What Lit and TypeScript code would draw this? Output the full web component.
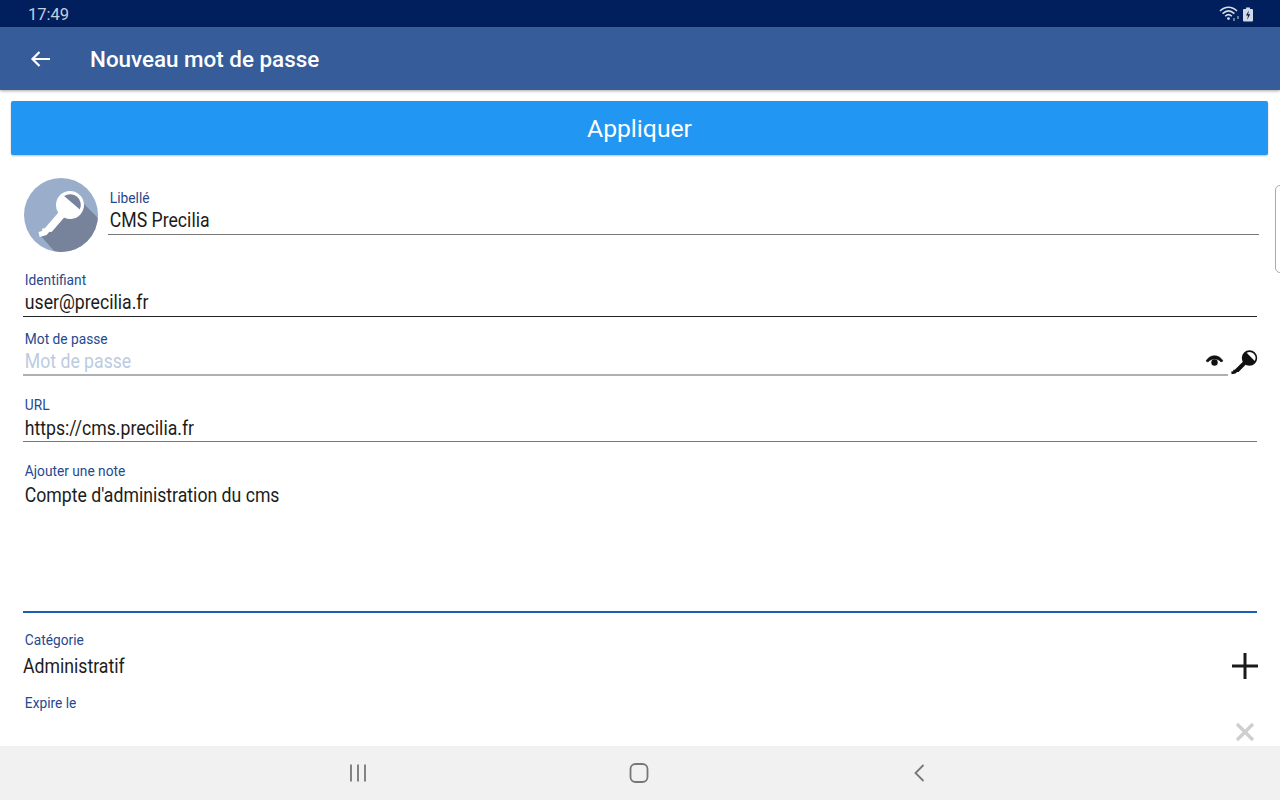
import { LitElement, html, css, svg } from "lit";
import { customElement } from "lit/decorators.js";

const keyIcon = (ring: string, seg: string) => svg`
  <circle r="14" fill="${ring}"/>
  <path d="M-10.400 -3 A10.800 10.800 0 0 1 10.400 -3 Z" fill="${seg}"/>
  <path d="M-3.800 10 H3.800 V32 L2 34 V38 L-2 44 L-6 41 L-4 38 L-5.500 36 L-3.800 34 Z" fill="${ring}"/>`;

@customElement("app-root")
export class AppRoot extends LitElement {
  static styles = css`
    :host { display: block; width: 1280px; height: 800px; font-family: Roboto, "Liberation Sans", sans-serif; background: #fff; overflow: hidden; position: relative; }
    .page { height: 800px; display: flex; flex-direction: column; }
    .status { height: 27px; flex: none; background: #001f5c; color: #c6cedc; display: flex; align-items: center; justify-content: space-between; padding: 1px 25px 0 28px; font-size: 16.500px; box-sizing: border-box; }
    .status svg { display: block; margin-top: -1px; }
    .appbar { height: 63px; flex: none; background: #365d99; color: #fff; display: flex; align-items: center; box-shadow: 0 1px 3px rgba(0,0,0,.35); position: relative; box-sizing: border-box; padding-left: 30px; }
    .title { font-size: 22.400px; font-weight: 500; margin-left: 39px; }
    .content { flex: 1; min-height: 0; overflow: hidden; padding: 11px 12px 0 11px; box-sizing: border-box; }
    .apply { height: 54px; width: 1257px; border-radius: 2px; background: #2196f3; color: #fff; font-size: 24.700px; padding-top: 1px; box-sizing: border-box; display: flex; align-items: center; justify-content: center; box-shadow: 0 1px 2px rgba(0,0,0,.25); }
    .first { display: flex; margin: 23px 9px 0 13px; }
    .avatar { display: block; flex: none; width: 74px; height: 74px; margin-right: 10px; }
    .grow { flex: 1; min-width: 0; }
    .field { height: 44px; border-bottom: 1px solid #777; margin-top: 12px; }
    .label { height: 16px; line-height: 16px; font-size: 15px; color: #25498f; padding-left: 2px; transform-origin: left; transform: scaleX(.915); white-space: nowrap; }
    .value { height: 24px; line-height: 24px; margin-top: 3px; font-size: 19.500px; color: #1c1c1c; padding-left: 2px; transform-origin: left; transform: scaleX(.905); white-space: nowrap; }
    .ph { color: #bccbe0; }
    .stack { margin: 20px 11px 0 12px; }
    .stack .dark { margin-top: 0; border-bottom-color: #222; }
    .pwrow { display: flex; align-items: flex-end; margin-top: 14px; }
    .pwrow .field { margin-top: 0; flex: 1; min-width: 0; border-bottom: 2px solid #b0b0b0; height: 43px; }
    .pwicons { width: 29px; height: 45px; flex: none; position: relative; }
    .pwicons svg { position: absolute; left: -24px; top: 14px; }
    .wide { margin-top: 21px; }
    .url .value { margin-top: 4px; }
    .note { height: 148px; border-bottom: 2px solid #1b5fb0; }
    .note .value { margin-top: 5px; }
    .cat { margin-top: 19px; display: flex; align-items: flex-start; justify-content: space-between; }
    .cat .value { margin-top: 7px; padding-left: 0; }
    .exp { margin-top: 16px; display: flex; align-items: flex-start; justify-content: space-between; }
    .plus { margin: 21px -1px 0 0; display: block; }
    .cross { margin: 27px 2px 0 0; display: block; }
    .nav { height: 54px; flex: none; background: #f1f1f1; display: flex; align-items: center; box-sizing: border-box; }
    .nav svg { display: block; }
    .nav-a { margin-left: 348px; }
    .nav-b { margin-left: 261px; }
    .nav-c { margin-left: 261px; }
    .edge { position: absolute; right: -6px; top: 185px; width: 9px; height: 86px; border: 1px solid #aaa; border-radius: 5px; background: #fff; }
  `;

  render() {
    return html`<div class="page">
      <div class="status">
        <span>17:49</span>
        <svg width="36" height="16" viewBox="0 0 36 16">
          <path d="M1 5 C6 0 13 0 18 5 M3.600 7.600 C7.400 4 11.600 4 15.400 7.600 M6.200 10.200 C8.400 8 10.600 8 12.800 10.200" fill="none" stroke="#d8dee9" stroke-width="1.600"/>
          <circle cx="9.500" cy="12.600" r="1.400" fill="#d8dee9"/>
          <path d="M15 12 V15 M19 10 V13" stroke="#8fa0bd" stroke-width="1.400"/>
          <rect x="24" y="3" width="10" height="12.500" rx="1" fill="#d3d9e4"/><rect x="27" y="1.500" width="4" height="2" fill="#d3d9e4"/>
          <path d="M29.800 4.500 L27 9.600 H29 L28.200 13.800 L31.200 8.200 H29.200 Z" fill="#001f5c"/>
        </svg>
      </div>
      <div class="appbar">
        <svg width="21" height="18" viewBox="0 0 21 18"><path d="M20 9 H2.500 M9.500 2 L2.500 9 L9.500 16" fill="none" stroke="#fff" stroke-width="2.200"/></svg>
        <span class="title">Nouveau mot de passe</span>
      </div>
      <div class="content">
        <div class="apply">Appliquer</div>
        <div class="first">
          <svg class="avatar" viewBox="0 0 74 74">
            <defs><clipPath id="av"><circle cx="37" cy="37" r="37"/></clipPath></defs>
            <circle cx="37" cy="37" r="37" fill="#9aaecb"/>
            <polygon points="54,20 90,56 90,90 31,74 16,57" fill="#76839b" clip-path="url(#av)"/>
            <g transform="translate(46 27) rotate(41)">${keyIcon("#fff", "#76839b")}</g>
          </svg>
          <div class="grow field">
            <div class="label">Libellé</div>
            <div class="value">CMS Precilia</div>
          </div>
        </div>
        <div class="stack">
          <div class="field dark"><div class="label">Identifiant</div><div class="value">user@precilia.fr</div></div>
          <div class="pwrow">
            <div class="field"><div class="label">Mot de passe</div><div class="value ph">Mot de passe</div></div>
            <div class="pwicons">
              <svg width="56" height="34" viewBox="0 0 56 34">
                <path d="M2 16 C6 9 15 9 19 16 L17 17 C14 13 7 13 4 17 Z" fill="#111" stroke="#111" stroke-width=".6"/>
                <circle cx="10.500" cy="17.500" r="3.200" fill="#111"/>
                <g transform="translate(45.500 13) rotate(45) scale(.55)">${keyIcon("#111", "#fff")}</g>
              </svg>
            </div>
          </div>
          <div class="field wide url"><div class="label">URL</div><div class="value">https://cms.precilia.fr</div></div>
          <div class="field wide note"><div class="label">Ajouter une note</div><div class="value">Compte d'administration du cms</div></div>
          <div class="cat">
            <div><div class="label">Catégorie</div><div class="value">Administratif</div></div>
            <svg class="plus" width="26" height="26" viewBox="0 0 26 26"><path d="M0 13 H26 M13 0 V26" stroke="#1a1a1a" stroke-width="3"/></svg>
          </div>
          <div class="exp">
            <div class="label">Expire le</div>
            <svg class="cross" width="20" height="20" viewBox="0 0 20 20"><path d="M2 2 L18 18 M18 2 L2 18" stroke="#cfcfcf" stroke-width="3.400"/></svg>
          </div>
        </div>
      </div>
      <div class="nav">
        <svg class="nav-a" width="20" height="20" viewBox="0 0 20 20"><path d="M3 1.500 V18.500 M10 1.500 V18.500 M17 1.500 V18.500" stroke="#777" stroke-width="1.800"/></svg>
        <svg class="nav-b" width="20" height="20" viewBox="0 0 20 20"><rect x="1.500" y="1" width="17" height="18" rx="5" fill="none" stroke="#777" stroke-width="1.800"/></svg>
        <svg class="nav-c" width="20" height="20" viewBox="0 0 20 20"><path d="M13.500 2 L5.500 10 L13.500 18" fill="none" stroke="#777" stroke-width="1.800"/></svg>
      </div>
      <div class="edge"></div>
    </div>`;
  }
}
